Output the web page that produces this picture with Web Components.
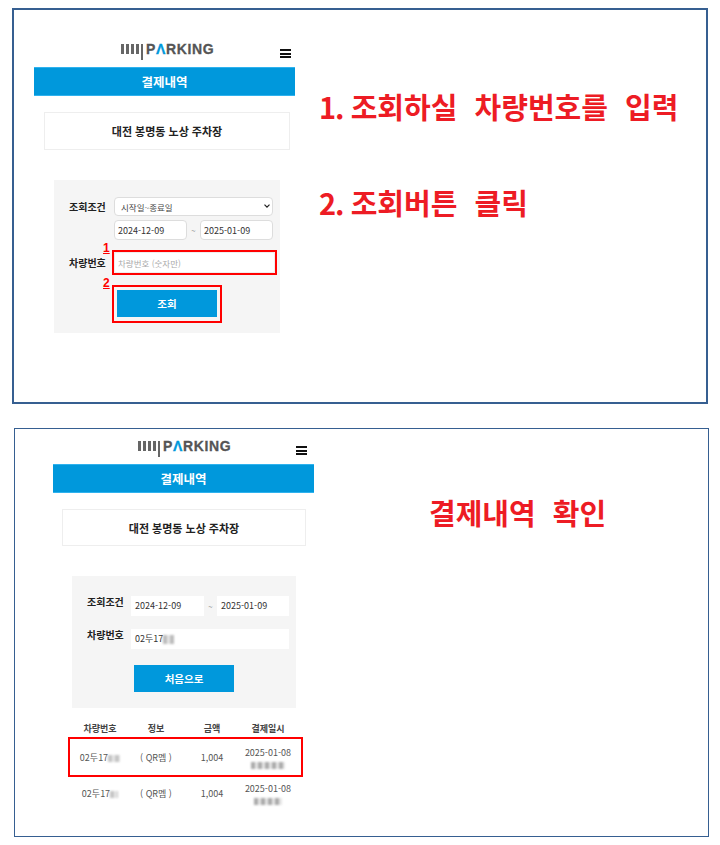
<!DOCTYPE html>
<html lang="ko">
<head>
<meta charset="utf-8">
<title>결제내역</title>
<style>
    html, body { margin: 0; background: #fff; }
    body {
        font-family: "Noto Sans CJK KR", "Noto Sans", sans-serif;
        display: flex;
        flex-direction: column;
        align-items: flex-start;
        padding: 8px 0 0 12px;
    }
</style>
</head>
<body>

<guide-frame variant="first">
    <parking-screen variant="first" venue="대전 봉명동 노상 주차장">
        <search-form></search-form>
    </parking-screen>
    <guide-notes slot="notes">
        <guide-note num="1." text="조회하실 차량번호를 입력"></guide-note>
        <guide-note num="2." text="조회버튼 클릭"></guide-note>
    </guide-notes>
</guide-frame>

<guide-frame variant="second">
    <parking-screen variant="second" venue="대전 봉명동 노상 주차장">
        <result-form></result-form>
        <payment-table></payment-table>
    </parking-screen>
    <guide-notes slot="notes" variant="single">
        <guide-note text="결제내역 확인"></guide-note>
    </guide-notes>
</guide-frame>

<script>
class GuideFrame extends HTMLElement {
    constructor() {
        super();
        this.attachShadow({ mode: 'open' });
        this.shadowRoot.innerHTML = `
            <style>
            :host {
                display: flex;
                box-sizing: border-box;
                background: #fff;
            }
            /* top screenshot has the heavier border */
            :host([variant="first"]) {
                width: 696px;
                height: 396px;
                border: 2px solid #365f91;
                padding: 0 0 0 20px;
            }
            :host([variant="second"]) {
                width: 695px;
                height: 409px;
                margin: 24px 0 0 2px;
                border: 1px solid #365f91;
                padding: 0 0 0 38px;
            }
            </style>
            <slot></slot>
            <slot name="notes"></slot>
        `;
    }
}

class ParkingScreen extends HTMLElement {
    constructor() {
        super();
        this.attachShadow({ mode: 'open' });
        this.shadowRoot.innerHTML = `
            <style>
            :host {
                display: flex;
                flex-direction: column;
                flex: none;
                width: 261px;
                --top-space: 32px;
                --logo-left: 87px;
                --menu-right: 4px;
                --venue: 16px 5px 30px 10px;
                --venue-height: 38px;
            }
            :host([variant="second"]) {
                --top-space: 10px;
                --logo-left: 85px;
                --menu-right: 7px;
                --venue: 16px 8px 30px 9px;
                --venue-height: 37px;
            }
            .top {
                height: 25px;
                display: flex;
                justify-content: space-between;
                padding: var(--top-space) var(--menu-right) 0 var(--logo-left);
            }
            .logo {
                display: flex;
                align-items: flex-start;
                height: 18px;
                gap: 2px;
            }
            .logo i {
                display: block;
                width: 3px;
                height: 10px;
                margin-top: 2px;
                background: #666;
            }
            .logo i.tall {
                width: 2px;
                height: 16px;
            }
            .logo b {
                margin-left: 1px;
                font: 700 14px/14px "Liberation Sans", sans-serif;
                letter-spacing: 0.65px;
                color: #555;
                -webkit-text-stroke: 0.3px currentColor;
            }
            .logo b em {
                font-style: normal;
                color: #0098dc;
            }
            .menu {
                width: 11px;
                margin-top: 7px;
                height: 9px;
                background: linear-gradient(#111 2px, transparent 2px, transparent 3.5px, #111 3.5px, #111 5.5px, transparent 5.5px, transparent 7px, #111 7px);
            }
            h1 {
                margin: 0;
                height: 29px;
                box-sizing: border-box;
                border-top: 1px solid #2fb2ee;
                border-bottom: 1px solid #2fb2ee;
                background: #0098dc;
                color: #fff;
                font-size: 12.5px;
                font-weight: 700;
                line-height: 27px;
                text-align: center;
            }
            .venue {
                margin: var(--venue);
                height: var(--venue-height);
                box-sizing: border-box;
                border: 1px solid #eee;
                color: #222;
                font-size: 11px;
                font-weight: 700;
                line-height: 36px;
                text-align: center;
            }
            </style>
            <div class="top">
                <div class="logo">
                    <i></i><i></i><i></i><i></i><i class="tall"></i>
                    <b>P<em>Λ</em>RKING</b>
                </div>
                <div class="menu"></div>
            </div>
            <h1>결제내역</h1>
            <div class="venue">${this.getAttribute('venue')}</div>
            <slot></slot>
        `;
    }
}

class RedRing extends HTMLElement {
    constructor() {
        super();
        this.attachShadow({ mode: 'open' });
        this.shadowRoot.innerHTML = `
            <style>
            :host {
                display: block;
                position: relative;
                box-sizing: border-box;
                border: 2px solid #f00;
            }
            span {
                position: absolute;
                left: -11px;
                top: -11px;
                color: #f00;
                font: 700 12px/14px "Liberation Sans", sans-serif;
                text-decoration: underline;
            }
            </style>
            <span>${this.getAttribute('mark')}</span>
            <slot></slot>
        `;
    }
}

class SearchForm extends HTMLElement {
    constructor() {
        super();
        this.attachShadow({ mode: 'open' });
        this.shadowRoot.innerHTML = `
            <style>
            :host {
                display: grid;
                grid-template-columns: 37px 159px;
                column-gap: 8px;
                align-items: center;
                margin: 0 15px 0 20px;
                padding: 17px 0 10px 15px;
                background: #f5f5f5;
            }
            label {
                font-size: 10px;
                font-weight: 700;
                color: #222;
                white-space: nowrap;
            }
            select, input {
                box-sizing: border-box;
                font: 9px "Noto Sans CJK KR", sans-serif;
                border: 1px solid #ddd;
                border-radius: 4px;
                background: #fff;
                color: #333;
                outline: none;
            }
            .pick {
                position: relative;
                height: 19px;
            }
            select {
                display: block;
                appearance: none;
                height: 19px;
                width: 159px;
                padding-left: 6px;
                font-size: 8.5px;
                color: #444;
            }
            /* arrow sits over the select */
            .pick svg {
                position: absolute;
                right: 3px;
                top: 7px;
                width: 6px;
                height: 4px;
                pointer-events: none;
            }
            .dates {
                grid-column: 2;
                display: grid;
                grid-template-columns: 73px 1fr 73px;
                align-items: center;
                height: 20px;
                margin-top: 4px;
            }
            .dates input {
                width: 73px;
                height: 20px;
                padding: 0 3px;
            }
            .dates span {
                font-size: 8px;
                color: #666;
                text-align: center;
            }
            .plate {
                margin: 10px -4px 0 -2px;
                height: 25px;
            }
            .plate input {
                display: block;
                width: 100%;
                height: 21px;
                padding: 0 3px;
                border-color: #eee;
                border-radius: 2px;
                font-size: 8.5px;
            }
            .plate input::placeholder { color: #aaa; }
            label.low { margin-top: 10px; }
            .send {
                grid-column: 2;
                margin: 10px 0 0 -2px;
                width: 110px;
                height: 38px;
                padding: 3px;
            }
            button {
                display: block;
                width: 100px;
                height: 27px;
                padding: 0;
                border: 0;
                background: #0098dc;
                color: #fff;
                font: 700 10.5px "Noto Sans CJK KR", sans-serif;
            }
            </style>
            <label>조회조건</label>
            <div class="pick">
                <select><option>시작일~종료일</option></select>
                <svg viewBox="0 0 6 4"><path d="M0.5 0.6 L3 3.1 L5.5 0.6" fill="none" stroke="#222" stroke-width="1.2"/></svg>
            </div>
            <div class="dates">
                <input value="2024-12-09"><span>~</span><input value="2025-01-09">
            </div>
            <label class="low">차량번호</label>
            <red-ring class="plate" mark="1"><input placeholder="차량번호 (숫자만)"></red-ring>
            <red-ring class="send" mark="2"><button>조회</button></red-ring>
        `;
    }
}

class ResultForm extends HTMLElement {
    constructor() {
        super();
        this.attachShadow({ mode: 'open' });
        this.shadowRoot.innerHTML = `
            <style>
            :host {
                display: grid;
                grid-template-columns: 36px 158px;
                column-gap: 8px;
                row-gap: 13px;
                margin: 0 18px 0 19px;
                padding: 20px 0 16px 15px;
                background: #f5f5f5;
            }
            label {
                font-size: 10px;
                line-height: 14px;
                font-weight: 700;
                color: #222;
                white-space: nowrap;
                margin-top: -1px;
            }
            .box {
                box-sizing: border-box;
                height: 20px;
                padding: 0 4px;
                background: #fff;
                color: #333;
                font-size: 9px;
                line-height: 20px;
                display: flex;
                align-items: center;
            }
            .dates {
                display: grid;
                grid-template-columns: 73px 1fr 72px;
                align-items: center;
            }
            .dates span {
                font-size: 8px;
                color: #666;
                text-align: center;
            }
            a {
                grid-column: 2;
                display: block;
                width: 100px;
                height: 27px;
                margin: 3px 0 0 3px;
                background: #0098dc;
                color: #fff;
                font-size: 10.5px;
                font-weight: 700;
                line-height: 27px;
                text-align: center;
            }
            </style>
            <label>조회조건</label>
            <div class="dates">
                <div class="box">2024-12-09</div><span>~</span><div class="box">2025-01-09</div>
            </div>
            <label>차량번호</label>
            <div class="box">02두17<blur-mark w="11" h="9" tone="#bbb"></blur-mark></div>
            <a>처음으로</a>
        `;
    }
}

class PaymentTable extends HTMLElement {
    constructor() {
        super();
        this.attachShadow({ mode: 'open' });
        const row = (hit, w1, w2) => `
            <div class="row ${hit}">
                <div>02두17<blur-mark w="${w1}" h="7" tone="#c4c4c4"></blur-mark></div>
                <div>( QR멤 )</div>
                <div>1,004</div>
                <div class="when">2025-01-08<blur-mark w="${w2}" h="7" tone="#aaa"></blur-mark></div>
            </div>`;
        this.shadowRoot.innerHTML = `
            <style>
            :host {
                display: block;
                margin: 11px 18px 0 19px;
                font-size: 9px;
                color: #555;
            }
            .head, .row {
                display: grid;
                grid-template-columns: repeat(4, 56px);
                text-align: center;
                align-items: center;
            }
            .head {
                height: 18px;
                font-weight: 700;
                color: #444;
            }
            .row {
                height: 33px;
                line-height: 13px;
            }
            /* the highlight sticks out past the columns */
            .row.hit {
                box-sizing: border-box;
                height: 40px;
                margin: 0 -7px 0 -4px;
                border: 2px solid #f00;
                padding: 0 5px 0 2px;
            }
            .when {
                display: flex;
                flex-direction: column;
                align-items: center;
            }
            .when blur-mark { margin: 3px 0 0; }
            </style>
            <div class="head">
                <div>차량번호</div><div>정보</div><div>금액</div><div>결제일시</div>
            </div>
            ${row('hit', 12, 34)}
            ${row('', 8, 28)}
        `;
    }
}

class BlurMark extends HTMLElement {
    constructor() {
        super();
        this.attachShadow({ mode: 'open' });
        const w = this.getAttribute('w');
        const h = this.getAttribute('h');
        const tone = this.getAttribute('tone');
        this.shadowRoot.innerHTML = `
            <style>
            :host {
                display: inline-block;
                width: ${w}px;
                height: ${h}px;
                vertical-align: -1px;
                background: repeating-linear-gradient(90deg, ${tone} 0 4px, #e6e6e6 4px 7px);
                filter: blur(1px);
            }
            </style>
        `;
    }
}

class GuideNotes extends HTMLElement {
    constructor() {
        super();
        this.attachShadow({ mode: 'open' });
        this.shadowRoot.innerHTML = `
            <style>
            :host {
                display: flex;
                flex-direction: column;
                gap: 50px;
                margin: 73px 0 0 24px;
                color: #ed1c24;
                font-size: 29px;
                font-weight: 700;
                line-height: 46px;
                white-space: nowrap;
            }
            :host([variant="single"]) { margin: 60px 0 0 115px; }
            </style>
            <slot></slot>
        `;
    }
}

class GuideNote extends HTMLElement {
    constructor() {
        super();
        this.attachShadow({ mode: 'open' });
        const num = this.getAttribute('num');
        this.shadowRoot.innerHTML = `
            <style>
            :host {
                display: block;
                word-spacing: 9px;
            }
            span {
                word-spacing: 0;
                letter-spacing: -1px;
            }
            </style>
            ${num ? `<span>${num} </span>` : ''}${this.getAttribute('text')}
        `;
    }
}

customElements.define('guide-frame', GuideFrame);
customElements.define('parking-screen', ParkingScreen);
customElements.define('red-ring', RedRing);
customElements.define('search-form', SearchForm);
customElements.define('result-form', ResultForm);
customElements.define('payment-table', PaymentTable);
customElements.define('blur-mark', BlurMark);
customElements.define('guide-notes', GuideNotes);
customElements.define('guide-note', GuideNote);
</script>
</body>
</html>
